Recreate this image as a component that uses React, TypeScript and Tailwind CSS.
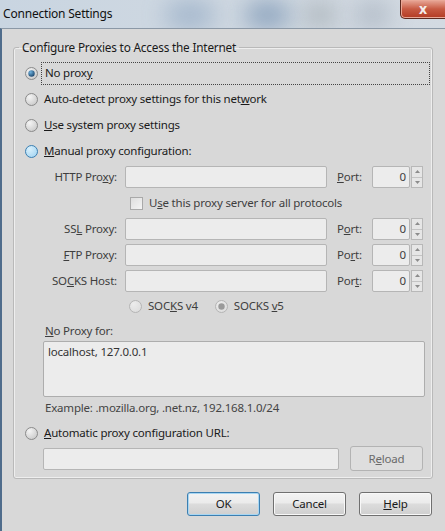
import React from 'react';

const font = "font-['Noto_Sans','Open_Sans',sans-serif]";

function Radio({ checked = false, hover = false, disabled = false }: { checked?: boolean; hover?: boolean; disabled?: boolean }) {
  const ring = hover ? '#3c7fb1' : disabled ? '#b4b4b4' : '#8a8a8a';
  const fillA = hover ? '#d9f0fc' : disabled ? '#ececec' : '#f4f4f4';
  const fillB = hover ? '#a4d5f2' : disabled ? '#dcdcdc' : '#c8c8c8';
  const id = hover ? 'rh' : disabled ? 'rd' : 'rn';
  return (
    <svg width="13" height="13" viewBox="0 0 13 13" className="shrink-0">
      <defs>
        <radialGradient id={id} cx="0.35" cy="0.3" r="0.8">
          <stop offset="0" stopColor={fillA} />
          <stop offset="1" stopColor={fillB} />
        </radialGradient>
        <radialGradient id="dot" cx="0.35" cy="0.3" r="0.8">
          <stop offset="0" stopColor="#6fb2de" />
          <stop offset="1" stopColor="#163f66" />
        </radialGradient>
      </defs>
      <circle cx="6.5" cy="6.5" r="6" fill={`url(#${id})`} stroke={ring} strokeWidth="1" />
      {checked && <circle cx="6.5" cy="6.5" r="3.2" fill={disabled ? '#9a9a9a' : 'url(#dot)'} />}
    </svg>
  );
}

function Spin() {
  return (
    <div className="flex flex-col w-[12px] h-[22px] ml-[1px] border border-[#b8b8b8] bg-[#e6e6e6]">
      <div className="flex-1 flex items-center justify-center border-b border-[#c4c4c4]">
        <svg width="5" height="3" viewBox="0 0 5 3"><path d="M0 3 L2.5 0 L5 3Z" fill="#8c8c8c" /></svg>
      </div>
      <div className="flex-1 flex items-center justify-center">
        <svg width="5" height="3" viewBox="0 0 5 3"><path d="M0 0 L2.5 3 L5 0Z" fill="#8c8c8c" /></svg>
      </div>
    </div>
  );
}

function ProxyRow({ label, port }: { label: React.ReactNode; port: React.ReactNode }) {
  return (
    <div className="flex items-center h-[22px] text-[#3e3e3e]">
      <div className="w-[103px] text-right">{label}</div>
      <div className="ml-[8px] w-[202px] h-[22px] bg-[#ececec] border border-[#b5b5b5] rounded-[2px]" />
      <div className="ml-[10px] w-[35px]">{port}</div>
      <div className="w-[38px] h-[22px] bg-[#ececec] border border-[#b5b5b5] rounded-[2px] flex items-center justify-end pr-[3px]">0</div>
      <Spin />
    </div>
  );
}

function Button({ children, primary = false }: { children: React.ReactNode; primary?: boolean }) {
  return (
    <div
      className={`w-[73px] h-[24px] rounded-[3px] flex items-center justify-center border bg-[linear-gradient(#f3f3f3,#ebebeb_45%,#dcdcdc_50%,#cfcfcf)] text-[#1a1a1a] ${
        primary ? 'border-[#3c7fb1] shadow-[inset_0_0_0_1px_#a8d6f2]' : 'border-[#707070] shadow-[inset_0_0_0_1px_#f8f8f8]'
      }`}
    >
      {children}
    </div>
  );
}

export default function App() {
  return (
    <div className={`w-[445px] h-[531px] flex flex-col overflow-hidden text-[11.5px] tracking-[-0.2px] leading-[16px] ${font}`}>
      {/* Title bar (aero glass) */}
      <div className="relative h-[28px] shrink-0 overflow-hidden bg-gradient-to-r from-[#c9d5e1] via-[#cfd8e1] to-[#d3dae2]">
        <div className="absolute left-[165px] top-[2px] w-[50px] h-[26px] rounded-full bg-[#8ea6c2] blur-md opacity-70" />
        <div className="absolute left-[245px] top-[4px] w-[45px] h-[22px] rounded-full bg-[#5f80a6] blur-md opacity-70" />
        <div className="absolute left-[305px] top-[4px] w-[30px] h-[22px] rounded-full bg-[#9aa3a8] blur-md opacity-80" />
        <div className="absolute left-[355px] top-[4px] w-[35px] h-[22px] rounded-full bg-[#9aa6b4] blur-md opacity-70" />
        <div className="relative pl-[3px] pt-[6px] text-[12px] text-[#111]">Connection Settings</div>
        <div className="absolute left-[400px] top-0 w-[50px] h-[19px] rounded-bl-[5px] border border-t-0 border-[#5d2a20] bg-gradient-to-b from-[#e8a99a] via-[#c75a43] to-[#b23a22] flex items-center justify-center pr-[4px] shadow-[inset_0_0_0_1px_#e9a897]">
          <span className="text-[#f4ecea] font-bold text-[14px] leading-none">x</span>
        </div>
      </div>

      {/* Dialog body */}
      <div className="flex-1 flex flex-col bg-[#d8d8d8] border-l-[2px] border-[#4f6c8b] border-t border-t-[#8b98a6] pl-[1px]">
        <fieldset className="mt-[9px] ml-[10px] w-[420px] border border-[#b9b9b9] rounded-[3px] shadow-[inset_0_0_0_1px_#eeeeee] pb-[7px]">
          <legend className="ml-[5px] px-[3px] text-[#1a1a1a] leading-[18px] text-[11.8px]">Configure Proxies to Access the Internet</legend>

          <div className="pt-[4px] text-[#1a1a1a]">
            <div className="flex items-center h-[26px] pl-[11px]">
              <Radio checked />
              <div className="ml-[3px] flex-1 mr-[2px] h-[23px] flex items-center pl-[3px] border border-dotted border-[#444]">
                No prox<u>y</u>
              </div>
            </div>
            <div className="flex items-center h-[26px] pl-[11px] gap-[6px]">
              <Radio />
              <span>Auto-detect proxy settings for this net<u>w</u>ork</span>
            </div>
            <div className="flex items-center h-[26px] pl-[11px] gap-[6px]">
              <Radio />
              <span><u>U</u>se system proxy settings</span>
            </div>
            <div className="flex items-center h-[26px] pl-[11px] gap-[6px]">
              <Radio hover />
              <span><u>M</u>anual proxy configuration:</span>
            </div>
          </div>

          <div className="mt-[2px]">
            <ProxyRow label={<>HTTP Pro<u>x</u>y:</>} port={<><u>P</u>ort:</>} />
            <div className="flex items-center h-[30px] pl-[116px] gap-[6px] text-[#3e3e3e]">
              <div className="w-[13px] h-[13px] border border-[#a9a9a9] bg-gradient-to-br from-[#dedede] to-[#f4f4f4]" />
              <span>U<u>s</u>e this proxy server for all protocols</span>
            </div>
            <div className="flex flex-col gap-[4px]">
              <ProxyRow label={<>SS<u>L</u> Proxy:</>} port={<>P<u>o</u>rt:</>} />
              <ProxyRow label={<><u>F</u>TP Proxy:</>} port={<>Po<u>r</u>t:</>} />
              <ProxyRow label={<>SO<u>C</u>KS Host:</>} port={<>Por<u>t</u>:</>} />
            </div>
            <div className="flex items-center h-[28px] pl-[115px] text-[#3e3e3e]">
              <Radio disabled />
              <span className="ml-[6px]">SOC<u>K</u>S v4</span>
              <span className="ml-[17px]"><Radio checked disabled /></span>
              <span className="ml-[6px]">SOCKS <u>v</u>5</span>
            </div>
          </div>

          <div className="pl-[31px] h-[21px] flex items-center text-[#3e3e3e]">
            <span><u>N</u>o Proxy for:</span>
          </div>
          <div className="ml-[29px] w-[382px] h-[56px] bg-[#ececec] border border-[#adadad] rounded-[2px] px-[4px] py-[2px] text-[#333]">
            localhost, 127.0.0.1
          </div>
          <div className="pl-[31px] h-[22px] flex items-center text-[#444]">
            Example: .mozilla.org, .net.nz, 192.168.1.0/24
          </div>
          <div className="flex items-center h-[26px] pl-[11px] gap-[6px] text-[#1a1a1a] mt-[1px]">
            <Radio />
            <span><u>A</u>utomatic proxy configuration URL:</span>
          </div>
          <div className="flex items-center h-[25px] pl-[29px]">
            <div className="w-[296px] h-[22px] bg-[#ececec] border border-[#b5b5b5] rounded-[2px]" />
            <div className="ml-[11px] w-[73px] h-[25px] rounded-[3px] border border-[#b3b3b3] bg-[#dedede] flex items-center justify-center text-[#6a6a6a]">
              R<u>e</u>load
            </div>
          </div>
        </fieldset>

        <div className="mt-[13px] flex justify-end gap-[13px] pr-[13px]">
          <Button primary>OK</Button>
          <Button>Cancel</Button>
          <Button><u>H</u>elp</Button>
        </div>
      </div>
    </div>
  );
}
